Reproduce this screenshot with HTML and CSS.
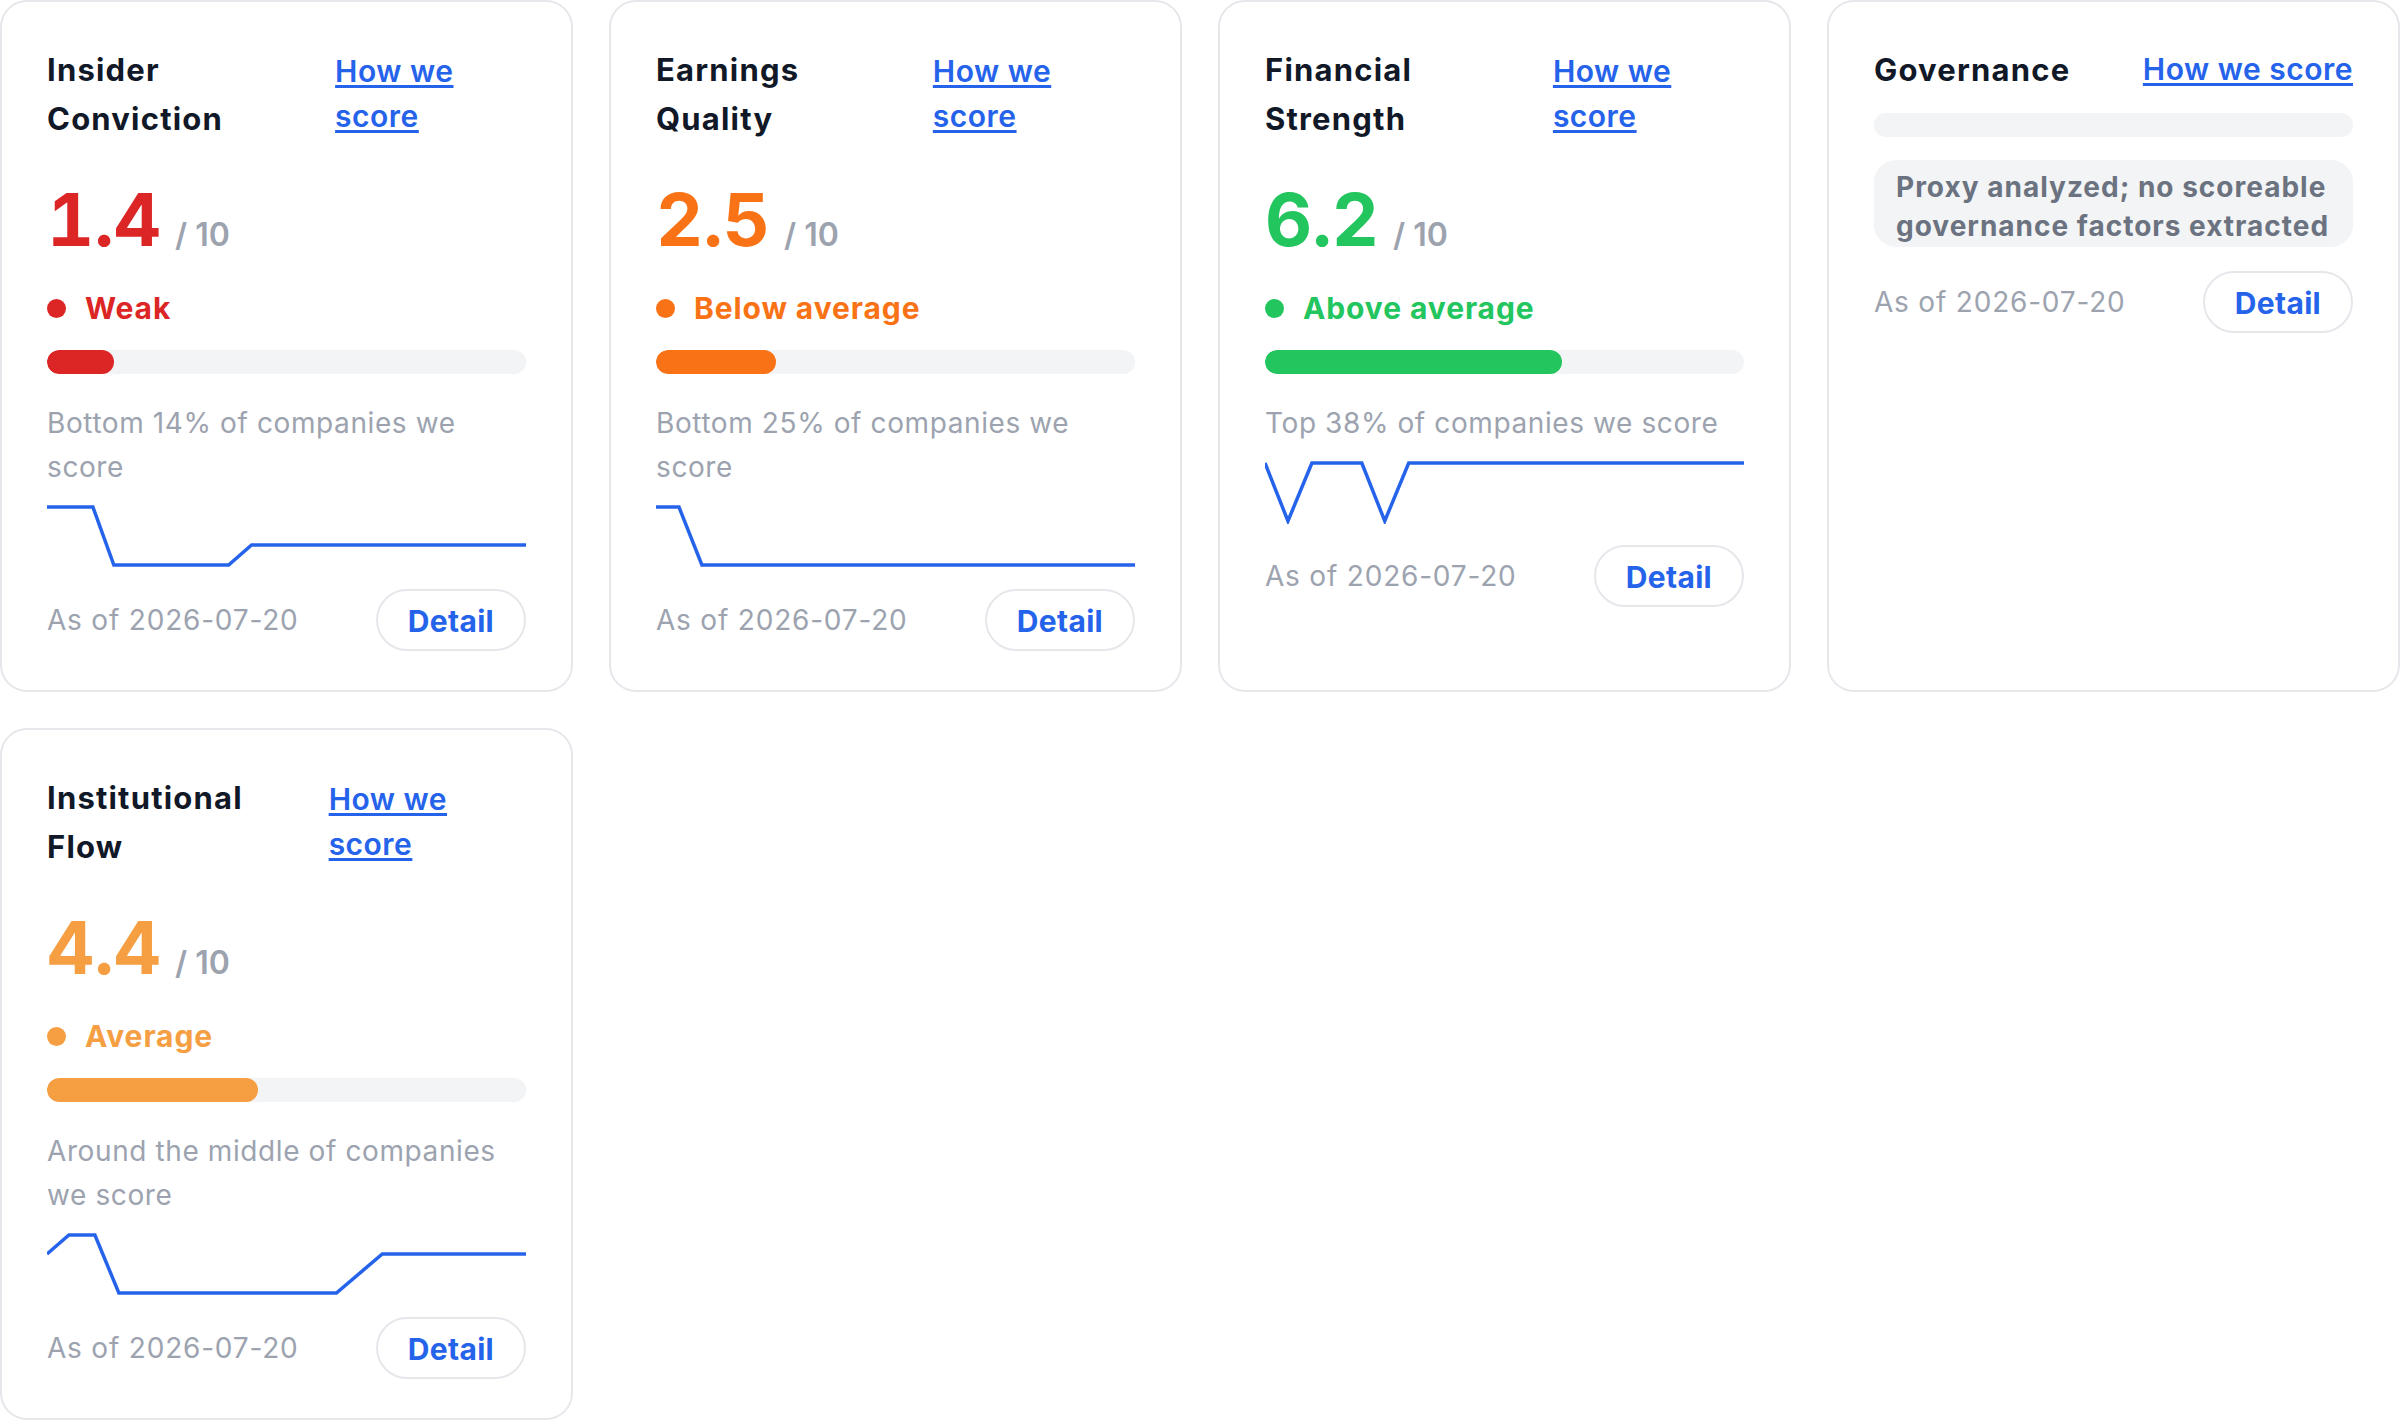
FILE: index.html
```html
<!DOCTYPE html>
<html lang="en">
<head>
    <meta charset="UTF-8">
    <meta name="viewport" content="width=device-width, initial-scale=1.0">
    <title>Scorecards</title>
    <link rel="stylesheet" href="styles.css">
</head>
<body>
    <div class="grid">
        <!-- Insider Conviction -->
        <div class="card tone-red">
            <div class="card-head">
                <h3 class="card-title">Insider Conviction</h3>
                <a class="how" href="#">How we score</a>
            </div>
            <div class="score"><span class="score-num">1.4</span><span class="out">/ 10</span></div>
            <div class="status"><span class="dot"></span>Weak</div>
            <div class="bar"><div class="bar-fill" style="width: 14%"></div></div>
            <p class="desc">Bottom 14% of companies we score</p>
            <svg class="spark" viewBox="0 0 480 64" preserveAspectRatio="none">
                <polyline points="0,3 46,3 67,61 182,61 205,41 480,41" />
            </svg>
            <div class="foot">
                <span class="asof">As of 2026-07-20</span>
                <button class="detail">Detail</button>
            </div>
        </div>

        <!-- Earnings Quality -->
        <div class="card tone-orange">
            <div class="card-head">
                <h3 class="card-title">Earnings Quality</h3>
                <a class="how" href="#">How we score</a>
            </div>
            <div class="score"><span class="score-num">2.5</span><span class="out">/ 10</span></div>
            <div class="status"><span class="dot"></span>Below average</div>
            <div class="bar"><div class="bar-fill" style="width: 25%"></div></div>
            <p class="desc">Bottom 25% of companies we score</p>
            <svg class="spark" viewBox="0 0 480 64" preserveAspectRatio="none">
                <polyline points="0,3 23,3 46,61 480,61" />
            </svg>
            <div class="foot">
                <span class="asof">As of 2026-07-20</span>
                <button class="detail">Detail</button>
            </div>
        </div>

        <!-- Financial Strength -->
        <div class="card tone-green">
            <div class="card-head">
                <h3 class="card-title">Financial Strength</h3>
                <a class="how" href="#">How we score</a>
            </div>
            <div class="score"><span class="score-num">6.2</span><span class="out">/ 10</span></div>
            <div class="status"><span class="dot"></span>Above average</div>
            <div class="bar"><div class="bar-fill" style="width: 62%"></div></div>
            <p class="desc">Top 38% of companies we score</p>
            <svg class="spark" viewBox="0 0 480 64" preserveAspectRatio="none">
                <polyline points="0,3 23,61 47,3 97,3 120,61 144,3 480,3" />
            </svg>
            <div class="foot">
                <span class="asof">As of 2026-07-20</span>
                <button class="detail">Detail</button>
            </div>
        </div>

        <!-- Governance: no score yet -->
        <div class="card">
            <div class="card-head">
                <h3 class="card-title">Governance</h3>
                <a class="how" href="#">How we score</a>
            </div>
            <div class="bar bar-empty"></div>
            <div class="note">Proxy analyzed; no scoreable governance factors extracted</div>
            <div class="foot foot-note">
                <span class="asof">As of 2026-07-20</span>
                <button class="detail">Detail</button>
            </div>
        </div>

        <!-- Institutional Flow -->
        <div class="card tone-amber">
            <div class="card-head">
                <h3 class="card-title">Institutional Flow</h3>
                <a class="how" href="#">How we score</a>
            </div>
            <div class="score"><span class="score-num">4.4</span><span class="out">/ 10</span></div>
            <div class="status"><span class="dot"></span>Average</div>
            <div class="bar"><div class="bar-fill" style="width: 44%"></div></div>
            <p class="desc">Around the middle of companies we score</p>
            <svg class="spark" viewBox="0 0 480 64" preserveAspectRatio="none">
                <polyline points="0,22 22,3 48,3 72,61 290,61 336,22 480,22" />
            </svg>
            <div class="foot">
                <span class="asof">As of 2026-07-20</span>
                <button class="detail">Detail</button>
            </div>
        </div>
    </div>
</body>
</html>
```

FILE: styles.css
```css
/* Page */
body {
    margin: 0;
    font-family: Inter, "Liberation Sans", sans-serif;
    background-color: #fff;
    color: #111827;
}
.grid {
    display: grid;
    grid-template-columns: repeat(4, 1fr);
    gap: 36px;
}

/* Card */
.card {
    display: flex;
    flex-direction: column;
    background-color: #fff;
    border: 2px solid #e5e7eb;
    border-radius: 27px;
    padding: 43px 45px 39px;
    --tone: #9ca3af;
}
.tone-red { --tone: #dc2626; }
.tone-orange { --tone: #f97316; }
.tone-green { --tone: #22c55e; }
.tone-amber { --tone: #f59e42; }

.card-head {
    display: flex;
    justify-content: space-between;
    align-items: center;
    gap: 18px;
}
.card-title {
    margin: 0;
    font-size: 31px;
    line-height: 49px;
    font-weight: 700;
    letter-spacing: 1.2px;
    color: #111827;
}
.how {
    font-size: 30px;
    line-height: 45px;
    font-weight: 600;
    letter-spacing: 0.5px;
    color: #2563eb;
    text-decoration: underline;
    text-underline-offset: 3px;
}

/* Score */
.score {
    display: flex;
    align-items: baseline;
    margin-top: 40px;
}
.score-num {
    font-size: 73px;
    line-height: 73px;
    font-weight: 700;
    color: var(--tone);
    font-variant-numeric: tabular-nums;
}
.score .out {
    margin-left: 14px;
    font-size: 32px;
    font-weight: 600;
    color: #9ca3af;
}
.status {
    display: flex;
    align-items: center;
    gap: 19px;
    margin-top: 34px;
    font-size: 30px;
    line-height: 36px;
    font-weight: 700;
    letter-spacing: 0.9px;
    color: var(--tone);
}
.dot {
    width: 19px;
    height: 19px;
    border-radius: 50%;
    background-color: var(--tone);
}
.bar {
    margin-top: 24px;
    height: 24px;
    border-radius: 12px;
    background-color: #f3f4f6;
    overflow: hidden;
}
.bar-fill {
    height: 100%;
    border-radius: 12px;
    background-color: var(--tone);
}
.bar-empty {
    margin-top: 19px;
}
.desc {
    margin: 27px 0 0;
    font-size: 28px;
    line-height: 44px;
    letter-spacing: 0.6px;
    color: #9ca3af;
}
.spark {
    display: block;
    width: 100%;
    height: 64px;
    margin-top: 15px;
}
.spark polyline {
    fill: none;
    stroke: #2563eb;
    stroke-width: 3.5;
}

/* Governance note */
.note {
    margin-top: 23px;
    padding: 8px 18px 1px 22px;
    border-radius: 22px;
    background-color: #f3f4f6;
    font-size: 28px;
    line-height: 39px;
    font-weight: 700;
    letter-spacing: 1px;
    color: #6b7280;
}

/* Footer */
.foot {
    display: flex;
    justify-content: space-between;
    align-items: center;
    margin-top: 21px;
}
.foot-note {
    margin-top: 24px;
}
.asof {
    font-size: 28px;
    line-height: 39px;
    letter-spacing: 0.8px;
    color: #9ca3af;
}
.detail {
    font-family: inherit;
    font-size: 30px;
    line-height: 36px;
    font-weight: 700;
    letter-spacing: 0.3px;
    color: #2563eb;
    background-color: #fff;
    border: 2px solid #e5e7eb;
    border-radius: 31px;
    padding: 12px 30px 10px;
    cursor: pointer;
}
```
